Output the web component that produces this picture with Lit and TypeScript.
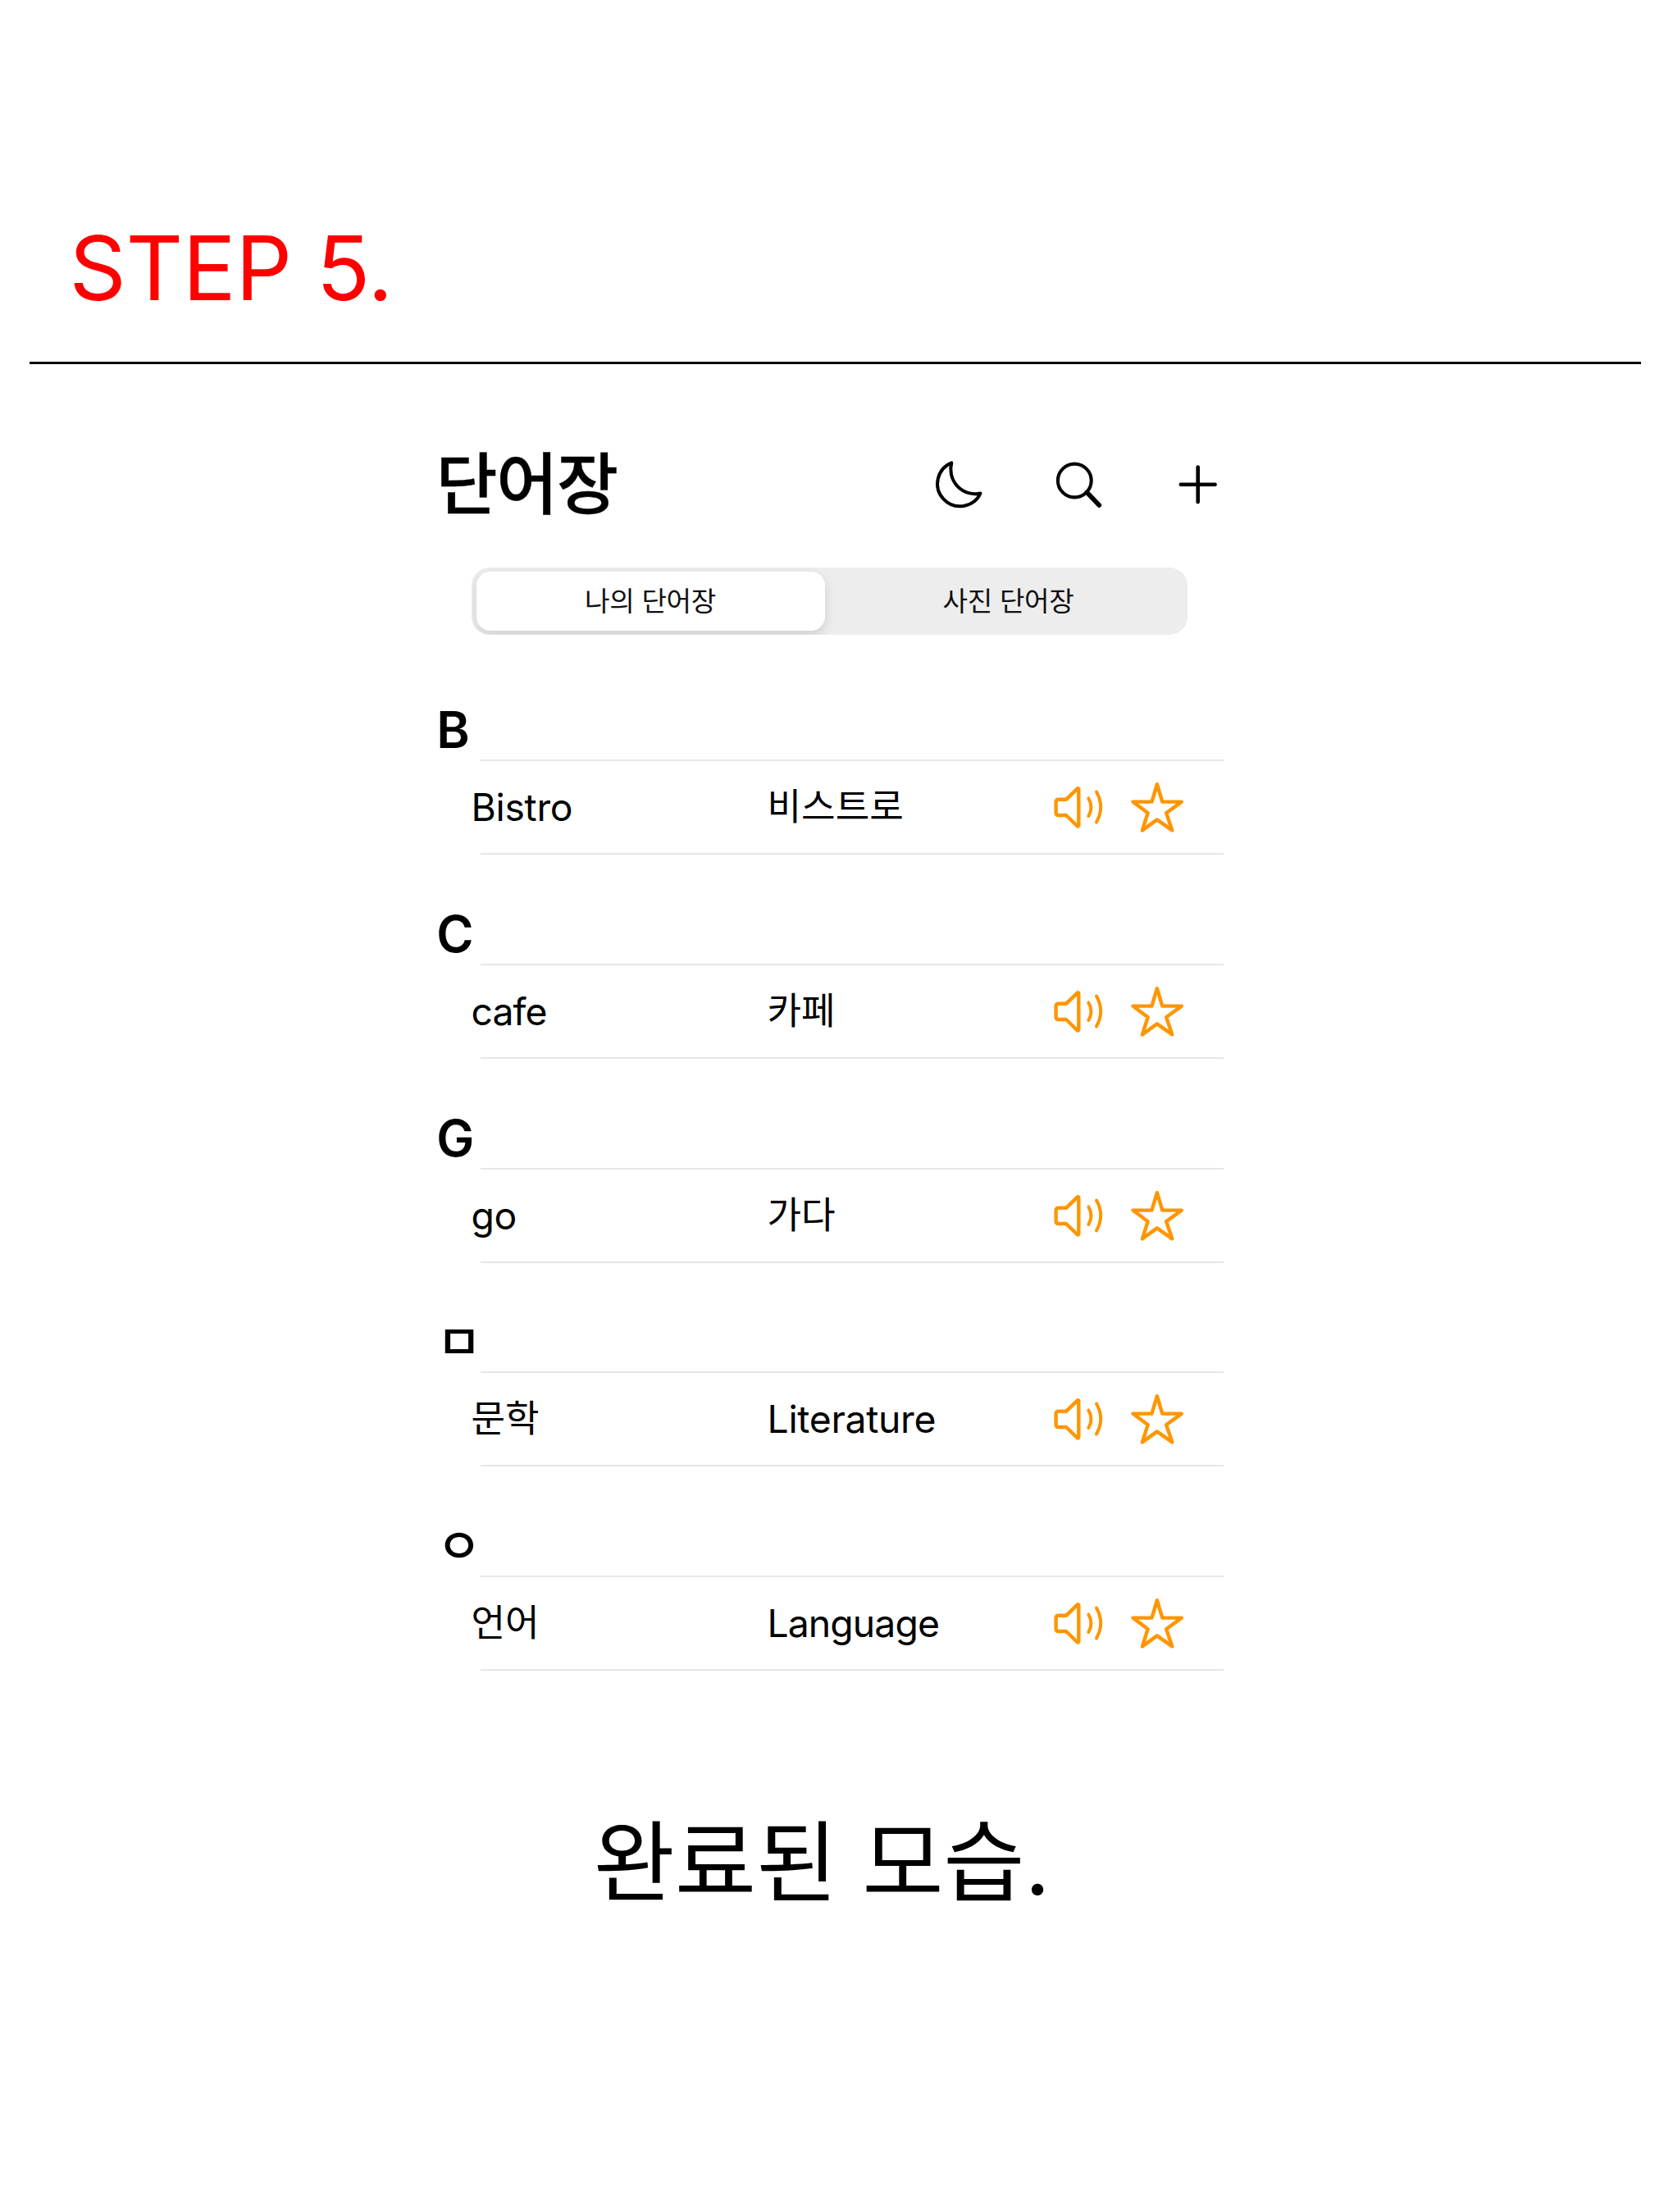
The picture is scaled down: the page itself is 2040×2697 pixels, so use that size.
import { LitElement, html, css, svg } from "lit";
import { customElement, state } from "lit/decorators.js";
import { classMap } from "lit/directives/class-map.js";

interface Entry {
  word: string;
  meaning: string;
}

interface Section {
  letter: string;
  entries: Entry[];
}

const SECTIONS: Section[] = [
  { letter: "B", entries: [{ word: "Bistro", meaning: "비스트로" }] },
  { letter: "C", entries: [{ word: "cafe", meaning: "카페" }] },
  { letter: "G", entries: [{ word: "go", meaning: "가다" }] },
  { letter: "ㅁ", entries: [{ word: "문학", meaning: "Literature" }] },
  { letter: "ㅇ", entries: [{ word: "언어", meaning: "Language" }] },
];

const isHangul = (text: string) => /[\u3131-\uD79D]/.test(text);

const isRound = (text: string) => /^[^\u3131-\uD79Dit]+$/.test(text) && text.length > 2;

const textClass = (text: string) =>
  classMap({ text: true, hangul: isHangul(text), round: isRound(text) });

const moon = svg`<path d="M23.3 5.3A27.5 27.5 0 1 0 58.5 42.5A30 30 0 0 1 23.3 5.3Z" stroke-width="4"/>`;
const search = svg`<circle cx="27.3" cy="27" r="20.4" stroke-width="4.1"/><path d="M42.3 41.3L57.3 57" stroke-width="5.6"/>`;
const plus = svg`<path d="M10.8 31.7H52.6M31.7 10.6V53" stroke-width="4.6"/>`;

@customElement("word-section")
class WordSection extends LitElement {
  static properties = { section: { attribute: false } };
  declare section: Section;

  static styles = css`
    :host {
      display: block;
      height: 248.75px;
    }
    .letter {
      box-sizing: border-box;
      height: 134px;
      padding: 68px 0 0 0.7px;
      margin: 0;
      font-size: 61.5px;
      line-height: 60px;
      font-weight: 600;
    }
    .letter.hangul {
      font-size: 60px;
      font-weight: 500;
      padding-left: 0.8px;
    }
    .line {
      height: 2px;
      margin: 0 1px 0 54px;
      background: #e6e6e8;
    }
    .row {
      display: grid;
      grid-template-columns: 361px 344px 70px 70px;
      align-items: center;
      height: 112px;
      padding-left: 43px;
    }
    .text {
      font-size: 46.3px;
      line-height: 60px;
      letter-spacing: -0.3px;
      white-space: nowrap;
    }
    .text.round {
      letter-spacing: -0.9px;
    }
    .text.hangul {
      font-size: 45.2px;
      letter-spacing: 0;
    }
    .icon {
      display: block;
      width: 70px;
      height: 68px;
      fill: none;
      stroke: #ff9500;
      stroke-width: 4.4;
      stroke-linecap: round;
      stroke-linejoin: round;
    }
    .star {
      margin-left: 26px;
    }
  `;

  render() {
    const { letter, entries } = this.section;
    return html`
      <h2 class=${classMap({ letter: true, hangul: isHangul(letter) })}>${letter}</h2>
      <div class="line"></div>
      ${entries.map(
        (e) => html`
          <div class="row">
            <span class=${textClass(e.word)}>${e.word}</span>
            <span class=${textClass(e.meaning)}>${e.meaning}</span>
            <svg class="icon" viewBox="0 0 70 68">
              <path d="M20 24.8H10.9Q7.6 24.8 7.6 28.1V40.7Q7.6 44 10.9 44H20L33.4 57Q35.3 58.5 35.3 56.2V12.6Q35.3 10.3 33.4 11.8Z" />
              <path d="M47.3 23.4Q53.7 34.2 47.3 45M57 15.6Q67.4 34 57 52.4" stroke-width="4" />
            </svg>
            <svg class="icon star" viewBox="0 0 70 68">
              <path d="M34.9 6.2L41.3 27.6H64.8L46.1 41.2L53.3 62.4L34.9 49.4L16.9 62.4L23.7 41.2L5.4 27.6H28.5Z" />
            </svg>
          </div>
          <div class="line"></div>
        `
      )}
    `;
  }
}

@customElement("app-root")
class AppRoot extends LitElement {
  @state() private tab = 0;

  static styles = css`
    :host {
      display: block;
      box-sizing: border-box;
      width: 2040px;
      height: 2697px;
      overflow: hidden;
      background: #fff;
      color: #000;
      font-family: Inter, "Noto Sans CJK KR", sans-serif;
    }
    .step {
      box-sizing: border-box;
      height: 441px;
      padding: 272.7px 0 0 84.5px;
      margin: 0;
      font-size: 108px;
      line-height: 108px;
      font-weight: 400;
      letter-spacing: -0.4px;
      color: #f00;
    }
    .rule {
      height: 3px;
      margin: 0 39px 0 36px;
      background: #000;
    }
    .phone {
      width: 961px;
      margin-left: 531.5px;
      padding-top: 102px;
    }
    .bar {
      display: flex;
      align-items: center;
      height: 90px;
    }
    .title {
      flex: 1;
      margin: 0;
      font-size: 81.6px;
      line-height: 82px;
      font-weight: 500;
      letter-spacing: -1.3px;
      -webkit-text-stroke: 0.4px #000;
    }
    .tools {
      display: flex;
      gap: 82px;
    }
    .tool {
      display: block;
      width: 64px;
      height: 64px;
      fill: none;
      stroke: #000;
      stroke-linecap: round;
      stroke-linejoin: round;
    }
    .segments {
      display: flex;
      box-sizing: border-box;
      width: 873px;
      height: 82px;
      margin: 56px 0 0 43.5px;
      border-radius: 22px;
      background: #ededee;
      overflow: hidden;
    }
    .segment {
      flex: 1;
      margin: 5px 6px 5px 5.5px;
      border-radius: 17px;
      font-size: 33.2px;
      line-height: 72px;
      letter-spacing: -0.35px;
      text-align: center;
      color: #111;
    }
    .segment.active {
      background: #fff;
      box-shadow: 0 5px 14px rgba(0, 0, 0, 0.13);
    }
    .list {
      padding-top: 18px;
    }
    .caption {
      margin: 181px 0 0 723.5px;
      font-size: 108px;
      line-height: 108px;
      letter-spacing: -0.2px;
    }
  `;

  render() {
    return html`
      <h1 class="step">STEP 5.</h1>
      <div class="rule"></div>
      <div class="phone">
        <div class="bar">
          <h2 class="title">단어장</h2>
          <div class="tools">
            ${[moon, search, plus].map((i) => html`<svg class="tool" viewBox="0 0 64 64">${i}</svg>`)}
          </div>
        </div>
        <div class="segments">
          ${["나의 단어장", "사진 단어장"].map(
            (label, i) => html`<div
              class=${classMap({ segment: true, active: this.tab === i })}
              @click=${() => (this.tab = i)}
            >${label}</div>`
          )}
        </div>
        <div class="list">
          ${SECTIONS.map((s) => html`<word-section .section=${s}></word-section>`)}
        </div>
      </div>
      <p class="caption">완료된 모습.</p>
    `;
  }
}
